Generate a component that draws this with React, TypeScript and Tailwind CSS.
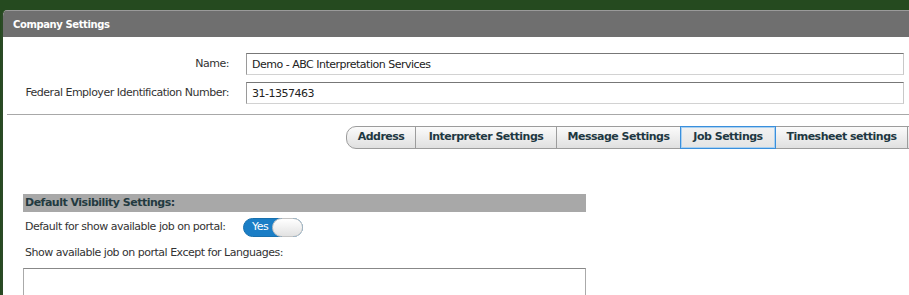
import { useState } from "react"

const tabs = [
  { label: "Address", w: "w-[70px]" },
  { label: "Interpreter Settings", w: "w-[142px]" },
  { label: "Message Settings", w: "w-[125px]" },
  { label: "Job Settings", w: "w-[96px]" },
  { label: "Timesheet settings", w: "w-[133px]" },
]

const inputCls =
  "ml-[17px] flex-1 h-[22px] px-[5px] border border-t-[#777] border-l-[#9a9a9a] border-b-[#d2d2d2] border-r-[#c8c8c8] outline-none text-[11px] text-[#222] tracking-[-0.5px]"

export default function App() {
  const [active, setActive] = useState("Job Settings")
  const [showJobs, setShowJobs] = useState(true)

  return (
    <div
      className="w-[909px] h-[295px] overflow-hidden bg-[#254a1f] pt-[10px] text-[11px] text-[#333] tracking-[-0.5px]"
      style={{ fontFamily: '"DejaVu Sans", Verdana, sans-serif' }}
    >
      <div className="ml-[1px] h-full bg-white rounded-tl-[6px] border-l-2 border-[#2b4a26] overflow-hidden">
        {/* Header */}
        <div className="h-[27px] bg-[#6f6f6f] border-t border-[#9a9a9a] flex items-center pl-[10px]">
          <span className="font-bold text-white text-[10px] tracking-[-0.4px]">Company Settings</span>
        </div>

        {/* Fields */}
        <div className="pt-[16px] pr-[5px]">
          <div className="flex items-center h-[22px]">
            <label className="w-[226px] text-right">Name:</label>
            <input defaultValue="Demo - ABC Interpretation Services" className={inputCls} />
          </div>
          <div className="flex items-center h-[22px] mt-[7px]">
            <label className="w-[226px] text-right">Federal Employer Identification Number:</label>
            <input defaultValue="31-1357463" className={inputCls} />
          </div>
        </div>

        <div className="ml-[4px] mt-[10px] border-t border-[#a8a8a8]" />

        {/* Tabs */}
        <div className="flex mt-[11px] ml-[343px] w-[700px]">
          {tabs.map((t, i) => {
            const isActive = t.label === active
            return (
              <button
                key={t.label}
                onClick={() => setActive(t.label)}
                className={`${t.w} shrink-0 h-[23px] font-bold text-[11px] tracking-[-0.5px] text-[#1e3842] border bg-gradient-to-b ${
                  i === 0 ? "rounded-l-[10px]" : "-ml-px"
                } ${
                  isActive
                    ? "border-[#3a8fdc] relative z-10 from-[#f2f2f2] to-[#e4e4e4] shadow-[inset_0_0_0_1px_#a9d0f0]"
                    : "border-[#9c9c9c] from-[#fbfbfb] to-[#e0e0e0]"
                }`}
              >
                {t.label}
              </button>
            )
          })}
          <div className="w-[80px] shrink-0 h-[23px] -ml-px border border-[#9c9c9c] bg-gradient-to-b from-[#fbfbfb] to-[#e0e0e0]" />
        </div>

        {/* Section */}
        <div className="ml-[20px] w-[563px] mt-[45px]">
          <div className="h-[18px] bg-[#a8a8a8] flex items-center pl-[2px]">
            <span className="font-bold text-[#233a40]">Default Visibility Settings:</span>
          </div>
          <div className="flex items-center mt-[6px] h-[19px] pl-[2px]">
            <span className="w-[202px]">Default for show available job on portal:</span>
            <button
              onClick={() => setShowJobs(!showJobs)}
              className={`ml-[16px] w-[60px] h-[19px] rounded-full border flex items-center relative ${
                showJobs ? "bg-[#1a7ec6] border-[#1870ad]" : "bg-[#e8e8e8] border-[#bbb]"
              }`}
            >
              <span className="text-white text-[11px] pl-[8px]">{showJobs ? "Yes" : ""}</span>
              <span
                className={`absolute top-[-1px] w-[31px] h-[19px] rounded-full bg-gradient-to-b from-white to-[#e2e2e2] border border-[#c4c4c4] ${
                  showJobs ? "right-[-1px]" : "left-[-1px]"
                }`}
              />
            </button>
          </div>
          <div className="mt-[9px] pl-[2px] h-[14px] leading-[14px]">Show available job on portal Except for Languages:</div>
          <div className="mt-[8px] h-[40px] border border-t-[#888] border-l-[#aaa] border-r-[#aaa] border-b-[#ccc]" />
        </div>
      </div>
    </div>
  )
}
